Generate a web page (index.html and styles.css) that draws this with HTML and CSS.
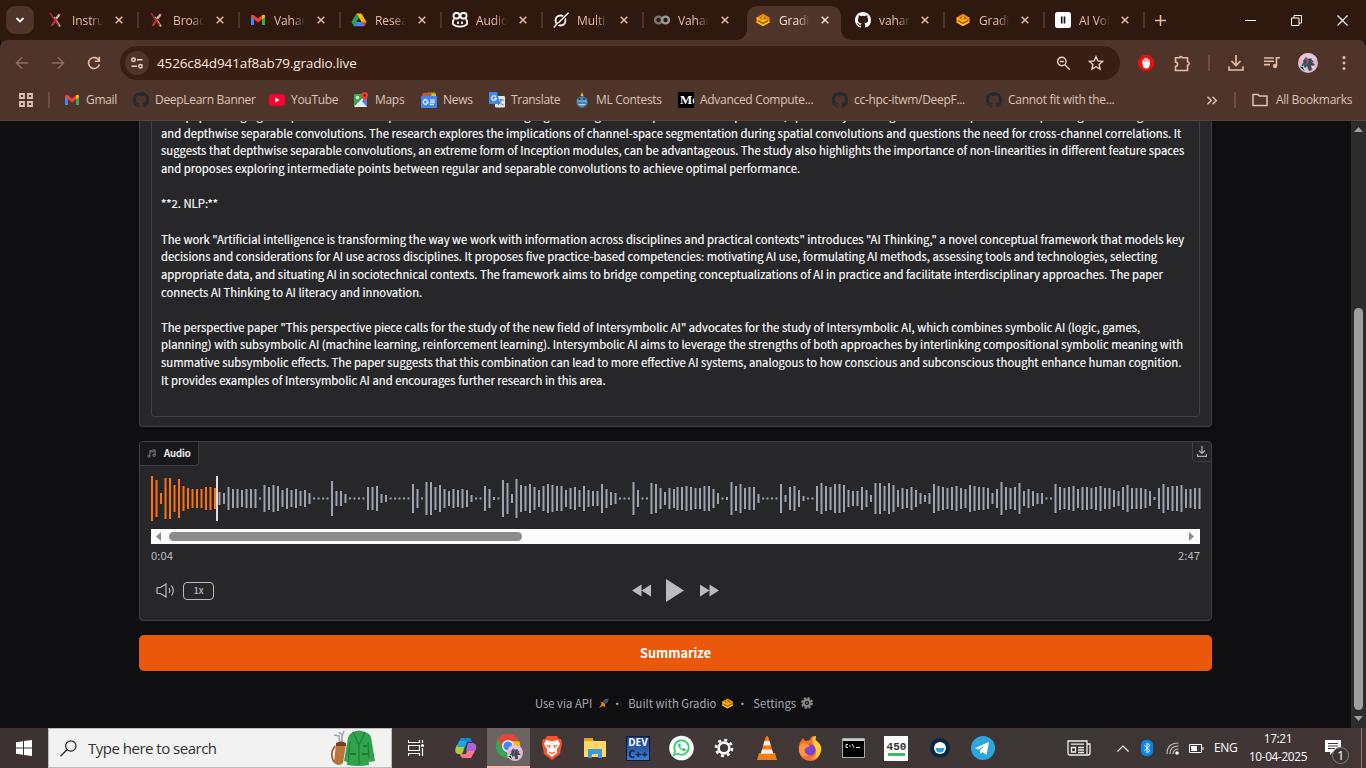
FILE: index.html
```html
<!DOCTYPE html>
<html lang="en">
<head>
<meta charset="utf-8">
<title>Gradio</title>
<link rel="stylesheet" href="styles.css">
</head>
<body>
<svg class="defs" aria-hidden="true">
  <defs>
    <symbol id="close" viewBox="0 0 8 8"><path d="M.7.7l6.6 6.6M7.3.7L.7 7.3" stroke="currentColor" stroke-width="1.5" fill="none"/></symbol>
    <symbol id="arxiv" viewBox="0 0 16 16"><path d="M11.5 2.8L4 13.2" stroke="#aaa" stroke-width="1.5"/><path d="M5.5 5l6.5 9.5" stroke="#aaa" stroke-width="2.2"/><path d="M2 1l8.5 12.5M12.5 1.8L3 14" stroke="#c4202b" stroke-width="1.4"/><path d="M8 6.5l3.5-4" stroke="#bbb" stroke-width="2"/></symbol>
    <symbol id="gmail" viewBox="0 0 16 16"><path d="M1 4v9h3V6.5z" fill="#4285f4"/><path d="M12 6.500V13h3V4z" fill="#34a853"/><path d="M1 4.200C1 2.500 3 2.300 4 3.200l4 3.200 4-3.200v4L8 10.400 4 7.200v0L1 4.900z" fill="#ea4335"/><path d="M12 3.200c1-.9 3-.7 3 1v.7l-3 2.500z" fill="#fbbc04"/></symbol>
    <symbol id="drive" viewBox="0 0 16 16"><path d="M5.500 1.500L.5 10l2.400 4.300L8 5.700z" fill="#2ba24c"/><path d="M5.500 1.500h5L15.500 10h-5z" fill="#fbbc04"/><path d="M5.200 10h10.300l-2.400 4.300H2.900z" fill="#4285f4"/><path d="M10.500 10h5l-2.400 4.300z" fill="#ea4335"/></symbol>
    <symbol id="copilotgh" viewBox="0 0 16 16"><rect x="1.500" y="1" width="6" height="5.500" rx="2.500" fill="none" stroke="#fff" stroke-width="1.800"/><rect x="8.500" y="1" width="6" height="5.500" rx="2.500" fill="none" stroke="#fff" stroke-width="1.800"/><path d="M2 7L.9 9v3c3 3.600 11.200 3.600 14.200 0V9L14 7" fill="none" stroke="#fff" stroke-width="1.800"/><path d="M6 9.500v2.500M10 9.500v2.500" stroke="#fff" stroke-width="1.700"/></symbol>
    <symbol id="grok" viewBox="0 0 16 16"><circle cx="7.500" cy="8.500" r="5" fill="none" stroke="#fff" stroke-width="1.800"/><path d="M1 15.500L15.500 1" stroke="#2f190e" stroke-width="3"/><path d="M.8 15.500L5 10.500M5.500 10.800L15.500.8" stroke="#fff" stroke-width="1.400"/></symbol>
    <symbol id="colab" viewBox="0 0 16 16"><circle cx="4.500" cy="8" r="3.400" fill="none" stroke="#777" stroke-width="2.400"/><circle cx="11.500" cy="8" r="3.400" fill="none" stroke="#999" stroke-width="2.400"/></symbol>
    <symbol id="gradio" viewBox="0 0 16 16"><path d="M8 1.800l6.600 3.700v5L8 14.200l-6.600-3.700v-5z" fill="#f98a00"/><path d="M8 4.400L11.400 6.200 8 8.100 4.600 6.200z" fill="#713c08"/><path d="M1.800 6l6.200 3.400 2.400-1.400L7 6.200l2-1M14.200 9.800L8 13.200l-6.200-3.400" fill="none" stroke="#ffd21c" stroke-width="1.300"/><path d="M3 8.600l5 2.700 5-2.700" fill="none" stroke="#713c08" stroke-width=".9"/></symbol>
    <symbol id="github" viewBox="0 0 16 16"><path fill="currentColor" d="M8 0C3.580 0 0 3.580 0 8c0 3.540 2.290 6.530 5.470 7.590.4.070.55-.17.55-.38v-1.490c-2.010.37-2.530-.49-2.690-.94-.09-.23-.48-.94-.82-1.130-.28-.15-.68-.52-.01-.53.63-.01 1.080.58 1.230.82.72 1.210 1.870.87 2.330.66.07-.52.28-.87.51-1.070-1.780-.2-3.640-.89-3.640-3.950 0-.87.31-1.590.82-2.150-.08-.2-.36-1.020.08-2.120 0 0 .67-.21 2.200.82a7.600 7.600 0 0 1 4 0c1.530-1.040 2.200-.82 2.200-.82.44 1.100.16 1.920.08 2.120.51.56.82 1.270.82 2.150 0 3.070-1.870 3.750-3.650 3.950.29.25.54.73.54 1.480v2.200c0 .21.15.46.55.38A8 8 0 0 0 16 8c0-4.420-3.580-8-8-8z"/></symbol>
    <symbol id="eleven" viewBox="0 0 16 16"><rect width="16" height="16" rx="2.500" fill="#fff"/><path d="M6.700 4.500v7M9.500 4.500v7" stroke="#111" stroke-width="1.600"/></symbol>
    <symbol id="youtube" viewBox="0 0 16 16"><rect y="2.300" width="16" height="11.400" rx="2.500" fill="#ff0033"/><path d="M6.400 5.600L10.600 8l-4.200 2.400z" fill="#fff"/></symbol>
    <symbol id="maps" viewBox="0 0 16 16"><rect x="1" y="2" width="13" height="13" rx="1" fill="#34a853"/><path d="M1 15L9 7l5 5v3z" fill="#e8eaed"/><path d="M8 8l6-5v12z" fill="#4285f4"/><path d="M2 15L13 4" stroke="#f5f5f5" stroke-width="1.500"/><circle cx="4.500" cy="5.500" r="1.800" fill="#d8f1df"/><path d="M11.500 0a3.500 3.500 0 0 0-3.500 3.500C8 6 11 7 11.500 10 12 7 15 6 15 3.500A3.500 3.500 0 0 0 11.500 0z" fill="#ea4335"/><circle cx="11.500" cy="3.500" r="1.200" fill="#7b1d14"/></symbol>
    <symbol id="news" viewBox="0 0 16 16"><path d="M2 1l12-1v6H2z" fill="#34a853"/><path d="M3 2.500l12-1V8H3z" fill="#fbbc04"/><path d="M1 2l9-1 1 5H1z" fill="#ea4335"/><rect y="4" width="16" height="12" rx="1" fill="#4285f4"/><path d="M6.500 8.500A2.300 2.300 0 1 0 7 10H5M9 8h5M9 10.200h5M9 12.400h4" stroke="#fff" fill="none" stroke-width="1.200"/></symbol>
    <symbol id="translate" viewBox="0 0 16 16"><rect x="6" y="4" width="10" height="11.500" rx="1" fill="#e1e4e8"/><path d="M9 8h6M12 7v1c0 2-1.500 4-3 5M10 9c1 2 2.500 3.500 4.500 4" stroke="#607d8b" fill="none"/><path d="M1 0h7l3 12H1a1 1 0 0 1-1-1V1a1 1 0 0 1 1-1z" fill="#4285f4"/><path d="M6.800 4.600A2.300 2.300 0 1 0 7.300 6.200H5.200" stroke="#fff" fill="none" stroke-width="1.100"/></symbol>
    <symbol id="contests" viewBox="0 0 16 16"><circle cx="8" cy="10" r="5.700" fill="#4484ad"/><path d="M3 9c1-1 2 1 3 0s2 1 3 0 3 1 4 0" stroke="#94c4da" fill="none"/><path d="M4 12q4 3 8 0z" fill="#b9d7e3"/><path d="M8 0l1.500 4h-3z" fill="#f2c336"/><circle cx="5.500" cy="7" r="1" fill="#153c58"/><circle cx="10" cy="7" r="1" fill="#153c58"/></symbol>
    <symbol id="avatar" viewBox="0 0 20 20"><circle cx="10" cy="10" r="10" fill="#edaed3"/><path d="M1 6a10 10 0 0 1 18 0L12 8z" fill="#e3c6da"/><path d="M5 8l3-4 2 2 4-1-1 3 4 4-3 1-1-1 1 5-3 1-2-5-3 3-3-1 3-4z" fill="#3c4b51"/><path d="M1 13l4 0 3 6M14 13l3 3M12 3l2 2" stroke="#a9eee1" stroke-width="1.600"/><path d="M7 5l3 3-2 4" stroke="#a05378" stroke-width="1.500" fill="none"/><path d="M13 7l2 2M6 10l-2 3" stroke="#176b4c" stroke-width="1.500"/></symbol>
  </defs>
</svg>

<header class="tabs">
  <button class="tab-search"><svg width="10" height="10" viewBox="0 0 10 10"><path d="M1.500 3L5 6.500 8.500 3" fill="none" stroke="#fff" stroke-width="1.800"/></svg></button>
  <div class="tab"><svg class="fav"><use href="#arxiv"/></svg><span class="name">Instruc</span><svg class="x"><use href="#close"/></svg></div>
  <div class="tab"><svg class="fav"><use href="#arxiv"/></svg><span class="name">Broad</span><svg class="x"><use href="#close"/></svg></div>
  <div class="tab"><svg class="fav"><use href="#gmail"/></svg><span class="name">Vahan</span><svg class="x"><use href="#close"/></svg></div>
  <div class="tab"><svg class="fav"><use href="#drive"/></svg><span class="name">Resea</span><svg class="x"><use href="#close"/></svg></div>
  <div class="tab"><svg class="fav"><use href="#copilotgh"/></svg><span class="name">Audio</span><svg class="x"><use href="#close"/></svg></div>
  <div class="tab"><svg class="fav"><use href="#grok"/></svg><span class="name">Multi-</span><svg class="x"><use href="#close"/></svg></div>
  <div class="tab nosep"><svg class="fav"><use href="#colab"/></svg><span class="name">Vahan</span><svg class="x"><use href="#close"/></svg></div>
  <div class="tab late active"><svg class="fav"><use href="#gradio"/></svg><span class="name">Gradio</span><svg class="x"><use href="#close"/></svg></div>
  <div class="tab late"><svg class="fav white"><use href="#github"/></svg><span class="name">vahan</span><svg class="x"><use href="#close"/></svg></div>
  <div class="tab late"><svg class="fav"><use href="#gradio"/></svg><span class="name">Gradio</span><svg class="x"><use href="#close"/></svg></div>
  <div class="tab late"><svg class="fav"><use href="#eleven"/></svg><span class="name">AI Voi</span><svg class="x"><use href="#close"/></svg></div>
  <svg class="plus" width="11" height="11" viewBox="0 0 11 11"><path d="M5.500 0v11M0 5.500h11" stroke="#e8bba5" stroke-width="1.500"/></svg>
  <div class="window-controls">
    <svg width="11" height="11" viewBox="0 0 11 11"><path d="M0 5.500h11" stroke="#fff"/></svg>
    <svg width="11" height="11" viewBox="0 0 11 11"><path d="M.5 3h7.500v7.500H.5zM3 3V.5h7.500V8H8" fill="none" stroke="#fff"/></svg>
    <svg width="11" height="11" viewBox="0 0 11 11"><path d="M.5.5l10 10M10.500.5l-10 10" stroke="#fff" stroke-width="1.100"/></svg>
  </div>
</header>

<nav class="toolbar">
  <div class="nav-buttons">
    <svg class="dim" width="14" height="14" viewBox="0 0 14 14"><path d="M13 7H2M7 1.500L1.500 7 7 12.500" fill="none" stroke="currentColor" stroke-width="1.500"/></svg>
    <svg class="dim" width="14" height="14" viewBox="0 0 14 14"><path d="M1 7h11M7 1.500L12.500 7 7 12.500" fill="none" stroke="currentColor" stroke-width="1.500"/></svg>
    <svg width="14" height="14" viewBox="0 0 14 14"><path d="M12 4.500A5.500 5.500 0 1 0 12.400 8.500M12.300.8v4.500H7.800" fill="none" stroke="#e8bba5" stroke-width="1.600"/></svg>
  </div>
  <div class="omnibox">
    <span class="site"><svg width="14" height="14" viewBox="0 0 14 14"><g fill="none" stroke="#e6d2c9" stroke-width="1.500"><circle cx="3.500" cy="3.700" r="1.700"/><path d="M7 3.700h5.500M1.500 10.300H7"/><circle cx="10.500" cy="10.300" r="1.700"/></g></svg></span>
    <span class="url">4526c84d941af8ab79.gradio.live</span>
    <svg class="lens" width="15" height="15" viewBox="0 0 15 15"><g fill="none" stroke="#e6d2c9" stroke-width="1.400"><circle cx="5.800" cy="5.500" r="4.200"/><path d="M9 9l4.800 4.800M3.800 5.500h4"/></g></svg>
    <svg width="16" height="16" viewBox="0 0 16 16"><path d="M8 1.700l1.900 4.200 4.600.5-3.400 3.100.9 4.500-4-2.300L4 14l.9-4.500L1.500 6.400l4.600-.5z" fill="none" stroke="#e6d2c9" stroke-width="1.400"/></svg>
  </div>
  <div class="actions">
    <svg width="16" height="16" viewBox="0 0 16 16"><path d="M5 0h6l5 5v6l-5 5H5l-5-5V5z" fill="#e51212"/><path d="M4.700 7v3q.5 3.500 3.500 3.500t3.500-3.500V7z" fill="#fff"/><path d="M5.300 9V5.200M7.100 8V3.400M9 8V3.400M10.900 8V5" stroke="#fff" stroke-width="1.400" stroke-linecap="round"/></svg>
    <svg class="ext" width="17" height="17" viewBox="0 0 17 17"><path d="M1.500 2.800h4.200c0-1.800 2.600-1.800 2.600 0h5.200v4c2.300.2 2.300 3.200 0 3.400v5.300h-12v-4c2.800-.3 2.800-4.200 0-4.500z" fill="none" stroke="#e8bba5" stroke-width="1.600"/></svg>
    <i class="rule"></i>
    <svg class="down" width="16" height="16" viewBox="0 0 16 16"><path d="M8 0v10M3.500 6L8 10.500 12.500 6M1 11.500V15h14v-3.500" fill="none" stroke="#e8bba5" stroke-width="1.700"/></svg>
    <svg class="media" width="16" height="14" viewBox="0 0 16 14"><path d="M0 2h10M0 5.300h10M0 8.600h6M12.500 10V1.800H16" fill="none" stroke="#e8bba5" stroke-width="1.600"/><circle cx="11" cy="10" r="2.200" fill="#e8bba5"/></svg>
    <svg class="me" width="20" height="20"><use href="#avatar"/></svg>
    <svg class="menu" width="4" height="16" viewBox="0 0 4 16"><g fill="#e8bba5"><circle cx="2" cy="2.500" r="1.500"/><circle cx="2" cy="8" r="1.500"/><circle cx="2" cy="13.500" r="1.500"/></g></svg>
  </div>
</nav>

<nav class="bookmarks">
  <svg class="apps" width="14" height="14" viewBox="0 0 14 14"><path d="M1 1h4v4H1zM9 1h4v4H9zM1 9h4v4H1zM9 9h4v4H9z" fill="none" stroke="#dcc3b8" stroke-width="1.800"/></svg>
  <i class="rule"></i>
  <div class="links">
    <span><svg><use href="#gmail"/></svg><b>Gmail</b></span>
    <span><svg class="gh"><use href="#github"/></svg><b>DeepLearn Banner</b></span>
    <span><svg><use href="#youtube"/></svg><b>YouTube</b></span>
    <span><svg><use href="#maps"/></svg><b>Maps</b></span>
    <span><svg><use href="#news"/></svg><b>News</b></span>
    <span><svg><use href="#translate"/></svg><b>Translate</b></span>
    <span><svg><use href="#contests"/></svg><b>ML Contests</b></span>
    <span><em class="medium">Me</em><b>Advanced Compute...</b></span>
    <span><svg class="gh"><use href="#github"/></svg><b>cc-hpc-itwm/DeepF...</b></span>
    <span><svg class="gh"><use href="#github"/></svg><b>Cannot fit with the...</b></span>
  </div>
  <svg class="more" width="12" height="9" viewBox="0 0 12 9"><path d="M1.500.8l3.800 3.700-3.800 3.700M6.500.8l3.800 3.700-3.800 3.700" fill="none" stroke="#dcc3b8" stroke-width="1.500"/></svg>
  <i class="rule"></i>
  <svg class="folder" width="16" height="14" viewBox="0 0 16 14"><path d="M1 1.500V12.500h14V3H7.500L6 1.500H1z" fill="none" stroke="#dcc3b8" stroke-width="1.500"/></svg>
  <b class="all">All Bookmarks</b>
</nav>

<div class="viewport">
  <main class="page">
    <section class="panel output">
      <div class="textarea">This paper bridging the space between Inception modules and existing regular designs for deep convolution operations, specifically focusing on the role of pointwise steps in regular settings
and depthwise separable convolutions. The research explores the implications of channel-space segmentation during spatial convolutions and questions the need for cross-channel correlations. It
suggests that depthwise separable convolutions, an extreme form of Inception modules, can be advantageous. The study also highlights the importance of non-linearities in different feature spaces
and proposes exploring intermediate points between regular and separable convolutions to achieve optimal performance.

**2. NLP:**

The work "Artificial intelligence is transforming the way we work with information across disciplines and practical contexts" introduces "AI Thinking," a novel conceptual framework that models key
decisions and considerations for AI use across disciplines. It proposes five practice-based competencies: motivating AI use, formulating AI methods, assessing tools and technologies, selecting
appropriate data, and situating AI in sociotechnical contexts. The framework aims to bridge competing conceptualizations of AI in practice and facilitate interdisciplinary approaches. The paper
connects AI Thinking to AI literacy and innovation.

The perspective paper "This perspective piece calls for the study of the new field of Intersymbolic AI" advocates for the study of Intersymbolic AI, which combines symbolic AI (logic, games,
planning) with subsymbolic AI (machine learning, reinforcement learning). Intersymbolic AI aims to leverage the strengths of both approaches by interlinking compositional symbolic meaning with
summative subsymbolic effects. The paper suggests that this combination can lead to more effective AI systems, analogous to how conscious and subconscious thought enhance human cognition.
It provides examples of Intersymbolic AI and encourages further research in this area.</div>
    </section>

    <section class="panel audio">
      <div class="audio-head">
        <span class="label"><svg width="9" height="9" viewBox="0 0 10 10"><path d="M3.200 8V1.800L9 .8V7M3.200 3.500L9 2.500" fill="none" stroke="#8a8a92" stroke-width=".9"/><circle cx="2" cy="8" r="1.300" fill="none" stroke="#8a8a92" stroke-width=".9"/><circle cx="7.800" cy="7" r="1.300" fill="none" stroke="#8a8a92" stroke-width=".9"/></svg><b>Audio</b></span>
        <span class="download"><svg width="10" height="11" viewBox="0 0 10 11"><path d="M5 0v7M2 4.500l3 3 3-3M.5 8v2.300h9V8" fill="none" stroke="#b0b0b7" stroke-width="1.200"/></svg></span>
      </div>
      <svg class="wave" id="wave" width="1050" height="46"></svg>
      <div class="hscroll"><svg width="5" height="9" viewBox="0 0 5 9"><path d="M5 0v9L0 4.500z" fill="#8b8b8b"/></svg><i></i><svg width="5" height="9" viewBox="0 0 5 9"><path d="M0 0v9l5-4.500z" fill="#8b8b8b"/></svg></div>
      <div class="times"><span>0:04</span><span>2:47</span></div>
      <div class="controls">
        <div class="left">
          <svg width="19" height="15" viewBox="0 0 19 15"><path d="M1 5.500v4Q1 10.500 2 10.500h2.500L10 14V1L4.500 4.500H2q-1 0-1 1zM13 5q1.600 2.500 0 5M15.500 2.500q3.500 5 0 10" fill="none" stroke="#bbbbc2" stroke-width="1.200"/></svg>
          <span class="speed">1x</span>
        </div>
        <div class="transport">
          <svg width="19" height="13" viewBox="0 0 19 13"><path d="M9.500.5v12L0 6.500zM19 .5v12L9.500 6.500z"/></svg>
          <svg width="18" height="23" viewBox="0 0 18 23"><path d="M0 0l18 11.500L0 23z"/></svg>
          <svg width="19" height="13" viewBox="0 0 19 13"><path d="M0 .5v12l9.500-6zM9.500.5v12l9.500-6z"/></svg>
        </div>
      </div>
    </section>

    <button class="submit">Summarize</button>

    <footer class="foot">
      <span>Use via API</span>
      <svg class="rocket" width="10" height="10" viewBox="0 0 10 10"><path d="M9.500.5L6 1 3.500 4.500l2 2L9 4z" fill="#44546a"/><path d="M3.500 4L1 5l2 .5L0 10l4.500-2.500L5 9.500 6.500 7z" fill="#ff8618"/></svg>
      <i>·</i><span>Built with Gradio</span><svg class="glogo" width="13" height="13"><use href="#gradio"/></svg>
      <i>·</i><span>Settings</span>
      <svg class="gear" width="12" height="12" viewBox="0 0 12 12"><circle cx="6" cy="6" r="3.300" fill="none" stroke="#858585" stroke-width="2.500"/><circle cx="6" cy="6" r="5" fill="none" stroke="#858585" stroke-width="2" stroke-dasharray="2.200 1.730"/><circle cx="6" cy="6" r="1" fill="#777"/></svg>
    </footer>
  </main>
  <aside class="vscroll">
    <svg width="9" height="5" viewBox="0 0 9 5"><path d="M0 5h9L4.500 0z" fill="#9f9f9f"/></svg>
    <i></i>
    <svg width="9" height="5" viewBox="0 0 9 5"><path d="M0 0h9L4.500 5z" fill="#9f9f9f"/></svg>
  </aside>
</div>

<footer class="taskbar">
  <div class="start"><svg width="16" height="16" viewBox="0 0 16 16"><path d="M0 2.200l7-1v6.300H0zM8 1.100L16 0v7.500H8zM0 8.500h7v6.300l-7-1zM8 8.500h8V16l-8-1.100z" fill="#fff"/></svg></div>
  <div class="search">
    <svg width="17" height="17" viewBox="0 0 17 17"><circle cx="10.800" cy="6" r="5.200" fill="none" stroke="#222" stroke-width="1.200"/><path d="M7 9.800L.5 16.300" stroke="#222" stroke-width="1.300"/></svg>
    <span>Type here to search</span>
    <svg class="golf" width="44" height="36" viewBox="0 0 44 36"><path d="M3 5l5 1 1 8M8 2l3 3v9M13 1l-2 5" fill="none" stroke="#a6aab4" stroke-width="1.700"/><path d="M5 13q5-2 10 1l-3 19q-4 4-9 0z" fill="#b87339"/><path d="M5 13q5-3 10 0v3H5z" fill="#76401e"/><path d="M4 16Q-2 24 3 32" fill="none" stroke="#8b512a" stroke-width="1.500"/><path d="M22 2q5-3 12 0 5 2 6 5l4 24-5 1-2-8 1 11q-11 2-22 0l1-11-1 8-3-1 4-23q1-4 5-6z" fill="#31a34d"/><path d="M22 2l6 13 6-13M19 12l-2 20M37 12l1 20M28 15v20" fill="none" stroke="#1a7c38" stroke-width="1.100"/><path d="M19 24h6M31 24h6M32 16h4" stroke="#17712f" stroke-width="1.400"/></svg>
  </div>
  <div class="taskview"><svg width="17" height="16" viewBox="0 0 17 16"><path d="M.5 0v2.500h11V0M.5 16v-2.500h11V16M.5 5.500h11v5H.5zM14.500 0v3M14.500 8v8" fill="none" stroke="#fff" stroke-width="1.200"/><circle cx="14.500" cy="5.500" r="1.500" fill="#fff"/></svg></div>
  <div class="apps-row">
    <span><svg width="24" height="24" viewBox="0 0 24 24"><path d="M7 2h8q2 0 3 4h-5L9 17H4Q0 16 2 11z" fill="#1686db"/><path d="M3 9h8l-3 9H4Q0 17 2 11z" fill="#b7c832"/><path d="M5 5h8l-2 6H3z" fill="#18a9dd"/><path d="M17 22H9q-2 0-3-4h6l3-10h6q2 2 1 5z" fill="#f77a87"/><path d="M14 7h5q4 1 3 6l-1 2h-9z" fill="#ad62dc"/></svg></span>
    <span class="on"><svg width="28" height="28" viewBox="0 0 28 28"><circle cx="13" cy="13" r="12" fill="#34a853"/><path d="M3 6.500A12 12 0 0 1 24 8H13L8 16z" fill="#ea4335"/><path d="M24.400 8.500A12 12 0 0 1 12 25l5-9-4-8z" fill="#fbbc04"/><circle cx="13" cy="13" r="6" fill="#fff"/><circle cx="13" cy="13" r="4.600" fill="#4285f4"/><use href="#avatar" x="12" y="12" width="16" height="16"/></svg></span>
    <span><svg width="22" height="26" viewBox="0 0 22 26"><path d="M6 1h10l2 3 2 0 1 4-2 11-8 6-8-6L1 8l1-4h2z" fill="#fb542b"/><path d="M5 5l4 1h4l4-1 2 4-3 5v4l-5 4-5-4v-4L3 9z" fill="#fff"/><path d="M5.500 10.500l3.500.5-1 2M16.500 10.500l-3.500.5 1 2M8 17l3 1.500L14 17" fill="none" stroke="#fb542b" stroke-width="1.200"/></svg></span>
    <span><svg width="22" height="20" viewBox="0 0 22 20"><path d="M0 1h8l2 2h12v16H0z" fill="#ffd767"/><path d="M0 0h9v3H0z" fill="#dfa421"/><path d="M4 11h14v9h-4v-4H8v4H4z" fill="#3e9ad6"/></svg></span>
    <span class="dev"><em>DEV</em><em class="cpp">C++</em></span>
    <span><svg width="25" height="26" viewBox="0 0 25 26"><circle cx="12.500" cy="13" r="12.300" fill="#fff"/><path d="M5 20l1.200-4A7.200 7.200 0 1 1 9 18.800z" fill="none" stroke="#25d366" stroke-width="1.700"/><path d="M9.500 9q-1.500 2 2 5.300t5.300 1.200v-1.500l-2-1-1.200 1q-2-1-2.500-2.500l.8-1-.9-2z" fill="#25d366"/></svg></span>
    <span><svg width="20" height="20" viewBox="0 0 20 20"><circle cx="10" cy="10" r="5.400" fill="none" stroke="#fff" stroke-width="2.600"/><circle cx="10" cy="10" r="8" fill="none" stroke="#fff" stroke-width="2.600" stroke-dasharray="3 3.280"/></svg></span>
    <span><svg width="20" height="24" viewBox="0 0 20 24"><path d="M2 17h16l2 7H0z" fill="#ed8014"/><path d="M10 0q1 0 1.500 1.500L17 20q-7 3-14 0L8.500 1.500Q9 0 10 0z" fill="#f47f0a"/><path d="M7.500 5h5l1.300 4.500H6.200zM5 13.500h10l1.300 4.200H3.700z" fill="#eee"/></svg></span>
    <span><svg width="24" height="25" viewBox="0 0 24 25"><path d="M3 5l2-3 2 3 5-1q1-4 4-4l1 4q7 4 6 11-2 10-11 10Q2 24 1 15 0 9 3 5z" fill="#ff6c2c"/><path d="M14 4q1-4 4-4l-.5 4q7 5 5.500 11-2 8-10 8 6-3 5-9z" fill="#ffce32"/><circle cx="12" cy="14" r="5.500" fill="#7c45cf"/><path d="M3 8q5-2 9 2-3 1-5 3-2 5 4 6-7 4-10-4 0-5 2-7z" fill="#ff9738"/></svg></span>
    <span><svg width="23" height="20" viewBox="0 0 23 20"><path d="M.5.5h22v19H.5z" fill="#000" stroke="#aaa"/><path d="M1 1h21v2H1z" fill="#c8ccd0"/><path d="M6 6.500H4v3h2M8 7v2M10 6l2 3.500M14 9.500h4" fill="none" stroke="#ddd"/></svg></span>
    <span class="score"><em>450</em><i></i></span>
    <span><svg width="20" height="22" viewBox="0 0 20 22"><circle cx="10" cy="11" r="10" fill="#0b2845"/><circle cx="10" cy="11" r="6" fill="#fff"/><path d="M5.500 11h9a4.500 4.500 0 0 1-9 0z" fill="#2c9ee8"/></svg></span>
    <span><svg width="24" height="26" viewBox="0 0 24 26"><circle cx="12" cy="13" r="12" fill="#2da5df"/><path d="M4 13l14-6-2.500 13-4-3-2 2-.5-4 6-5-7.500 4.500z" fill="#fff"/></svg></span>
  </div>
  <div class="tray">
    <svg class="paper" width="24" height="16" viewBox="0 0 24 16"><path d="M1 1h19v14H3q-2 0-2-2zM20 4h3v9q0 2-2 2h-3M4 4.200h13M11 7.500h6M11 10h6M11 12.500h6" fill="none" stroke="#eee" stroke-width="1.300"/><path d="M4.500 7.500h4v4.500h-4z" fill="none" stroke="#eee" stroke-width="1.300"/></svg>
    <svg class="chev" width="12" height="7" viewBox="0 0 12 7"><path d="M.5 6.500L6 1l5.500 5.500" fill="none" stroke="#fff" stroke-width="1.200"/></svg>
    <svg class="bt" width="12" height="16" viewBox="0 0 12 16"><rect width="12" height="16" rx="5" fill="#0a84f4"/><path d="M3 5l6 5.500L6 13V3l3 2.500L3 11" fill="none" stroke="#fff"/></svg>
    <svg class="wifi" width="13" height="13" viewBox="0 0 13 13"><g fill="none" stroke="#c5c0bf" stroke-width="1.200"><path d="M1 12Q1 1 12.500 1M4 12Q4 4 12.500 4M7 12Q7 7 12.500 7"/></g><circle cx="11" cy="11" r="1.800" fill="#fff"/></svg>
    <svg class="bat" width="15" height="9" viewBox="0 0 15 9"><path d="M.5.5h12v8H.5zM14 3v3" fill="none" stroke="#fff"/><path d="M2 2h6v5H2z" fill="#fff"/></svg>
    <span class="eng">ENG</span>
    <div class="clock"><span>17:21</span><span>10-04-2025</span></div>
    <div class="notif"><svg width="24" height="24" viewBox="0 0 24 24"><path d="M0 0h16v12H8l-3 3v-3H0z" fill="#fff"/><path d="M3 3.500h10M3 6h10M3 8.500h7" stroke="#403635"/><circle cx="15.500" cy="15.500" r="8" fill="#3c3433" stroke="#898382"/></svg><b>1</b></div>
    <i class="peek"></i>
  </div>
</footer>
<script src="wave.js"></script>
</body>
</html>
```
FILE: styles.css
```css
* { box-sizing: border-box; }
body { margin: 0; width: 1366px; height: 768px; overflow: hidden; display: flex; flex-direction: column; background: #0f0f11; font: 12px/16px "Open Sans", "Noto Sans", sans-serif; }
svg { flex: none; display: block; }
i, em { font-style: normal; }
b { font-weight: 400; }
button { border: 0; padding: 0; font: inherit; }
.defs { position: absolute; width: 0; height: 0; }

.tabs { z-index: 1; height: 40px; flex: none; background: #2f190e; display: flex; align-items: center; padding-left: 6px; }
.tab-search { width: 28px; height: 28px; margin-right: 6px; border-radius: 9px; background: #4f3529; display: grid; place-items: center; }
.tab { position: relative; width: 101px; height: 28px; display: flex; align-items: center; padding-left: 8px; color: #e8bba5; flex: none; }
.tab::after { content: ""; position: absolute; left: 97px; top: 6px; width: 2px; height: 16px; background: #4f3529; }
.late { width: 100px; }
.late::after { left: 96px; }
.late .x { margin-left: 11px; }
.tab.nosep::after { display: none; }
.fav { width: 16px; height: 16px; }
.white { color: #fff; }
.name { width: 31px; margin-left: 8px; padding-top: 1px; overflow: hidden; white-space: nowrap; letter-spacing: -.1px; -webkit-mask-image: linear-gradient(90deg, #000 60%, transparent); mask-image: linear-gradient(90deg, #000 60%, transparent); }
.x { width: 8px; height: 8px; margin-left: 12px; }
.late .x { margin-left: 11px; }
.active { color: #f8dfd4; z-index: 1; }
.active::before { content: ""; position: absolute; z-index: -1; left: 0; top: 0; width: 94px; height: 34px; border-radius: 10px 10px 0 0; background: #4f3529; }
.tab.active::after { left: -10px; top: 24px; width: 114px; height: 10px; z-index: -2; background: radial-gradient(circle at 0 0, transparent 9.500px, #4f3529 10px) 0 0 / 10px 10px no-repeat, radial-gradient(circle at 100% 0, transparent 9.500px, #4f3529 10px) 100% 0 / 10px 10px no-repeat; }
.plus { margin-left: 8px; }
.window-controls { display: flex; gap: 35px; margin-left: auto; padding-right: 18px; }

.toolbar { height: 46px; flex: none; display: flex; align-items: center; background: #4f3529; border-radius: 8px 8px 0 0; box-shadow: 0 -8px 0 -1px #2f190e; }
.nav-buttons { width: 120px; display: flex; gap: 22px; padding-left: 15px; color: #e8bba5; }
.dim { color: #8d6d60; }
.omnibox { width: 1000px; height: 34px; border-radius: 17px; background: #391e13; display: flex; align-items: center; padding: 0 16px 0 5px; }
.site { width: 24px; height: 24px; border-radius: 50%; background: #4f3529; display: grid; place-items: center; }
.url { margin-left: 8px; flex: 1; color: #fbe8df; font-size: 13.500px; letter-spacing: -.13px; }
.lens { margin-right: 17px; }
.actions { flex: 1; display: flex; align-items: center; padding-left: 18px; }
.ext { margin-left: 20px; }
.actions .rule { margin-left: 17px; }
.down { margin-left: 18px; }
.media { margin-left: 20px; }
.me { margin-left: 18px; }
.menu { margin-left: 24px; }
.rule { width: 2px; height: 16px; background: #6d4e41; }

.bookmarks { height: 35px; flex: none; border-bottom: 1px solid #59443b; background: #4f3529; display: flex; align-items: center; padding: 0 0 6px 19px; color: #dcc3b8; }
.bookmarks b { white-space: nowrap; letter-spacing: -.3px; padding-bottom: 1px; }
.bookmarks > .rule { margin-left: 15px; }
.links { display: grid; grid-template-columns: 69px 136px 84px 68px 68px 85px 104px 154px 154px 220px; margin-left: 14px; }
.links span { display: flex; align-items: center; gap: 6px; }
.links svg { width: 16px; height: 16px; }
.gh { color: #23292f; }
.medium { width: 16px; height: 16px; overflow: hidden; background: #000; color: #fff; font: 700 13px/16px "Liberation Serif", serif; padding-left: 2px; }
.bookmarks > .more + .rule { margin-left: 16px; }
.folder { margin-left: 16px; }
.all { margin-left: 8px; }

.viewport { height: 607px; flex: none; display: flex; overflow: hidden; }
.page { width: 1351px; height: 607px; padding: 0 139px; display: flex; flex-direction: column; gap: 14px; font-family: "Noto Sans CJK SC", sans-serif; }
.panel { background: #27272a; border: 1px solid #3f3f46; border-radius: 4px; flex: none; }
.output { height: 306px; border-top: 0; border-radius: 0 0 4px 4px; padding: 0 11px 10px; overflow: hidden; }
.textarea { height: 296px; overflow: hidden; border: 1px solid #3f3f46; border-top: 0; border-radius: 0 0 4px 4px; padding: 0 9px 26.600px; white-space: pre; color: #fff; font-size: 11.294px; line-height: 17.640px; -webkit-text-stroke: .15px #fff; display: flex; align-items: flex-end; }
.audio { height: 180px; }
.audio-head { display: flex; justify-content: space-between; height: 34px; align-items: flex-start; }
.label { height: 24px; width: 59px; display: flex; align-items: center; gap: 8px; padding: 0 0 2px 7px; background: #18181b; border: solid #3f3f46; border-width: 0 1px 1px 0; border-radius: 3px 0 4px; color: #f4f4f5; font-size: 9.700px; }
.label b { font-weight: 500; -webkit-text-stroke: .2px #f4f4f5; }
.label svg { margin-top: 2px; }
.download { width: 19px; height: 20px; border: solid #3f3f46; border-width: 0 0 1px 1px; border-radius: 0 3px 0 4px; display: grid; place-items: center; }
.wave { margin-left: 11px; }
.hscroll { width: 1049px; height: 15px; margin: 7px 0 0 11px; background: #fcfcfc; display: flex; align-items: center; padding: 0 6px 0 5px; }
.hscroll i { width: 353px; height: 9px; border-radius: 5px; background: #8b8b8b; margin: 0 auto 0 8px; }
.times { display: flex; justify-content: space-between; padding: 3px 11px 0; color: #bbbbc2; font-size: 11.280px; line-height: 17px; }
.controls { display: flex; align-items: center; padding: 8px 11px 0 16px; height: 45px; }
.left { display: flex; align-items: center; gap: 8px; width: 476px; }
.speed { width: 31px; height: 18px; border: 1px solid #bbbbc2; border-radius: 4px; color: #bbbbc2; font-size: 9.700px; line-height: 15px; text-align: center; -webkit-text-stroke: .2px #bbbbc2; }
.transport { display: flex; align-items: center; gap: 16px; fill: #bbbbc2; }
.transport svg:first-child { margin-right: -1px; }
.submit { height: 36px; flex: none; border-radius: 5px; background: #ea580c; color: #fff; font: 700 12.700px/34px "Noto Sans CJK SC", sans-serif; padding-bottom: 1px; }
.foot { display: flex; align-items: center; align-self: center; margin-top: 8px; height: 20px; color: #a9a9b3; font-size: 11.280px; padding-right: 3px; }
.rocket { margin-left: 7px; }
.foot i { width: 19px; text-align: center; text-indent: -3px; }
.glogo, .gear { margin-left: 5px; }
.vscroll { width: 15px; background: #2c2c2c; display: flex; flex-direction: column; align-items: center; padding: 6px 0 7px; }
.vscroll i { width: 9px; height: 402px; margin: auto 0 6px; border-radius: 5px; background: #9f9f9f; }

.taskbar { height: 40px; flex: none; display: flex; background: linear-gradient(90deg, #3d3232, #413837 50%, #3c3635 80%, #433635); }
.start { width: 48px; display: grid; place-items: center; }
.search { width: 344px; border: 1px solid #bdbdbd; background: #f2f2f2; display: flex; align-items: center; padding: 0 16px 0 11px; color: #333; font-size: 15px; }
.search span { margin-left: 11px; flex: 1; letter-spacing: -.5px; }
.taskview { width: 52px; padding-right: 3px; display: grid; place-items: center; }
.apps-row { display: grid; grid-template-columns: repeat(13, 43.100px); }
.apps-row span { display: grid; place-items: center; }
.apps-row .on { background: #6b6362; border-bottom: 2px solid #ffb2b0; }
.apps-row .dev, .apps-row .score { width: 24px; height: 25px; align-self: center; justify-self: center; background: linear-gradient(#183a82, #3f80cf); border: 1px solid #0d1c41; font: 700 10px/11px "Open Sans", sans-serif; color: #fff; align-content: center; }
.dev .cpp { color: #10213e; font-size: 11px; }
.apps-row .score { background: #fff; border: 0; color: #333; font: 700 11px/12px "Liberation Mono", monospace; }
.score i { width: 17px; height: 3px; background: #36bb62; }
.tray { flex: 1; display: flex; align-items: center; color: #fff; justify-content: flex-end; }
.chev { margin-left: 26px; }
.bt { margin-left: 12px; }
.wifi { margin-left: 13px; }
.bat { margin-left: 10px; }
.eng { margin-left: 10px; width: 24px; letter-spacing: -.4px; }
.clock { width: 62px; margin: 0 0 2px 9px; display: flex; flex-direction: column; align-items: center; font-size: 11.800px; line-height: 18px; letter-spacing: -.35px; }
.notif { position: relative; margin-left: 16px; padding-top: 7px; }
.notif b { position: absolute; left: 12px; top: 14px; font-size: 13px; }
.peek { width: 1px; height: 40px; margin: 0 4px 0 12px; background: #8a8281; }
```
FILE: wave.js
```js
// Bar heights of the waveform, in pixels.
const bars = [45,37,11,41,41,27,39,25,21,19,19,19,23,23,21,13,11,23,19,19,17,19,19,19,2,27,23,27,25,17,21,17,19,15,17,11,2,2,2,2,35,15,15,9,2,2,2,2,23,23,25,9,7,2,2,2,2,2,29,19,2,33,33,23,27,19,15,19,17,19,17,7,2,2,25,19,3,2,
37,31,9,39,27,25,29,23,17,25,29,27,25,25,17,21,23,17,25,17,15,15,29,19,13,11,2,2,2,33,17,2,2,31,29,21,13,21,19,23,23,25,23,21,21,25,25,19,11,2,3,33,25,29,21,23,23,9,2,2,2,2,29,7,23,25,17,5,2,2,25,31,25,23,29,29,27,17,15,15,
23,17,7,31,31,25,31,27,17,21,19,23,17,11,7,11,29,25,23,21,23,25,21,19,27,25,23,23,21,11,19,33,23,21,23,31,15,19,15,11,11,2,2,29,23,21,23,25,19,23,23,21,23,25,21,21,17,15,23,27,21,21,21,19,15,3,21,29,23,25,25,27,19,19,21,21];
const wave = document.getElementById("wave");
const played = 15;
function rect(x, y, w, h, fill) {
  const r = document.createElementNS("http://www.w3.org/2000/svg", "rect");
  Object.entries({ x, y, width: w, height: h, fill }).forEach(([k, v]) => r.setAttribute(k, v));
  wave.append(r);
}
bars.forEach((h, n) => rect(n * 4.5 - (n > 116 ? 1 : 0), 22.5 - h / 2, 2, h, n < played ? "#f97316" : "#9ca3af"));
rect(65, 0, 2, 45, "#e7dcec");
```
